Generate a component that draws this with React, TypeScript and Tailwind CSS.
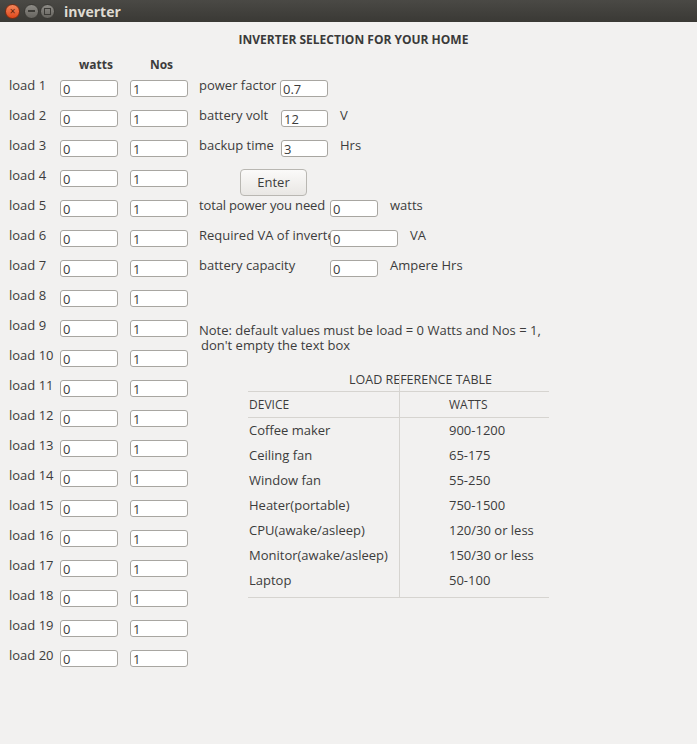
import React from "react";

const loads = Array.from({ length: 20 }, (_, i) => i + 1);

const devices = [
  ["Coffee maker", "900-1200"],
  ["Ceiling fan", "65-175"],
  ["Window fan", "55-250"],
  ["Heater(portable)", "750-1500"],
  ["CPU(awake/asleep)", "120/30 or less"],
  ["Monitor(awake/asleep)", "150/30 or less"],
  ["Laptop", "50-100"],
];

const Field = ({ value, w }: { value: string; w: string }) => (
  <input
    readOnly
    value={value}
    className={`${w} h-[17px] shrink-0 rounded-[3px] border border-[#a8a6a1] bg-white px-[2px] pt-[2px] text-[13px] leading-[13px] text-[#3c3c3c] outline-none`}
  />
);

const TitleBar = () => (
  <div className="flex h-[22px] items-center bg-gradient-to-b from-[#4a4945] to-[#3a3935] pl-[5px]">
    <div className="flex items-center gap-[1px]">
      <div className="flex h-[15px] w-[15px] items-center justify-center rounded-full border border-[#7a2c12] bg-gradient-to-b from-[#f4865a] to-[#df4617] text-[10px] leading-none text-[#5a1d08]">
        ×
      </div>
      <div className="ml-[3px] flex h-[15px] w-[15px] items-center justify-center rounded-full border border-[#3a3935] bg-gradient-to-b from-[#8d8b86] to-[#66645f]">
        <div className="h-[2px] w-[7px] bg-[#3c3b37]" />
      </div>
      <div className="flex h-[15px] w-[15px] items-center justify-center rounded-full border border-[#3a3935] bg-gradient-to-b from-[#8d8b86] to-[#66645f]">
        <div className="h-[7px] w-[7px] border border-[#3c3b37]" />
      </div>
    </div>
    <span className="ml-[9px] text-[14px] font-bold text-[#dfdbd2]">inverter</span>
  </div>
);

export default function App() {
  return (
    <div
      className="min-h-[744px] w-full bg-[#f2f1f0] text-[13px] text-[#3c3c3c]"
      style={{ fontFamily: '"Open Sans", "Noto Sans", sans-serif' }}
    >
      <TitleBar />
      <div className="h-[28px] pl-[10px] pt-[11px] text-center text-[12px] font-bold leading-[14px] text-[#3a3a3a]">
        INVERTER SELECTION FOR YOUR HOME
      </div>
      <div className="flex">
        {/* loads column */}
        <div className="w-[199px] shrink-0">
          <div className="flex h-[23px] items-end text-[12px] font-bold leading-[16px]">
            <span className="ml-[79px]">watts</span>
            <span className="ml-[37px]">Nos</span>
          </div>
          {loads.map((n) => (
            <div key={n} className="flex h-[30px] items-center">
              <span className="mb-[4px] w-[60px] shrink-0 pl-[9px] whitespace-nowrap">load {n}</span>
              <Field value="0" w="w-[58px]" />
              <span className="w-[12px]" />
              <Field value="1" w="w-[58px]" />
            </div>
          ))}
        </div>

        {/* calc column */}
        <div className="flex-1 pt-[23px]">
          <div className="flex h-[30px] items-center">
            <span className="mb-[4px] w-[81px] shrink-0 whitespace-nowrap">power factor</span>
            <Field value="0.7" w="w-[48px]" />
          </div>
          <div className="flex h-[30px] items-center">
            <span className="mb-[4px] w-[82px] shrink-0 whitespace-nowrap">battery volt</span>
            <Field value="12" w="w-[47px]" />
            <span className="mb-[4px] ml-[12px]">V</span>
          </div>
          <div className="flex h-[30px] items-center">
            <span className="mb-[4px] w-[82px] shrink-0 whitespace-nowrap">backup time</span>
            <Field value="3" w="w-[47px]" />
            <span className="mb-[4px] ml-[12px]">Hrs</span>
          </div>
          <div className="flex h-[30px] items-start pt-[6px]">
            <button className="ml-[41px] h-[27px] w-[67px] rounded-[4px] border border-[#b9b7b2] bg-gradient-to-b from-[#fbfaf9] to-[#e9e7e4] text-[13px] text-[#3c3c3c]">
              Enter
            </button>
          </div>
          <div className="flex h-[30px] items-center">
            <span className="mb-[4px] w-[131px] shrink-0 whitespace-nowrap tracking-[-0.15px]">total power you need</span>
            <Field value="0" w="w-[48px]" />
            <span className="mb-[4px] ml-[12px]">watts</span>
          </div>
          <div className="flex h-[30px] items-center">
            <span className="mb-[4px] w-[131px] shrink-0 overflow-hidden whitespace-nowrap">Required VA of inverter</span>
            <Field value="0" w="w-[68px]" />
            <span className="mb-[4px] ml-[12px]">VA</span>
          </div>
          <div className="flex h-[30px] items-center">
            <span className="mb-[4px] w-[131px] shrink-0 whitespace-nowrap">battery capacity</span>
            <Field value="0" w="w-[48px]" />
            <span className="mb-[4px] ml-[12px]">Ampere Hrs</span>
          </div>

          <div className="mt-[40px] leading-[15px]">
            <div>Note: default values must be load = 0 Watts and Nos = 1,</div>
            <div className="pl-[2px]">don't empty the text box</div>
          </div>

          <div className="relative ml-[49px] mt-[20px] w-[301px]">
            <div className="absolute bottom-[1px] left-[151px] top-0 w-px bg-[#d6d4d0]" />
            <div className="h-[18px] pl-[101px] text-[12.5px] leading-[14px]">LOAD REFERENCE TABLE</div>
            <div className="flex h-[27px] items-center border-y border-[#d6d4d0] text-[12px]">
              <span className="w-[152px] pl-[1px]">DEVICE</span>
              <span className="pl-[49px]">WATTS</span>
            </div>
            <div className="border-b border-[#d6d4d0] pb-[4px]">
              {devices.map(([d, w]) => (
                <div key={d} className="flex h-[25px] items-center">
                  <span className="w-[152px] pl-[1px]">{d}</span>
                  <span className="pl-[49px]">{w}</span>
                </div>
              ))}
            </div>
          </div>
        </div>
      </div>
    </div>
  );
}
